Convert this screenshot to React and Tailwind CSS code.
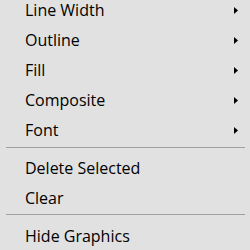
const items = [
  { label: 'Line Width', sub: true },
  { label: 'Outline', sub: true },
  { label: 'Fill', sub: true },
  { label: 'Composite', sub: true },
  { label: 'Font', sub: true },
  { sep: true, className: 'mt-[2px] mb-[5px]' },
  { label: 'Delete Selected' },
  { label: 'Clear' },
  { sep: true, className: 'mt-[1px] mb-[6px]' },
  { label: 'Hide Graphics' },
];

function Arrow() {
  return (
    <svg width="4" height="7" viewBox="0 0 4 7" className="block">
      <polygon points="0,0 4,3.5 0,7" fill="#000" />
    </svg>
  );
}

export default function App() {
  return (
    <div className="w-[250px] h-[250px] overflow-hidden bg-[#e1e1e1] text-[#000] font-['Open_Sans',sans-serif] text-[16px]">
      <div className="mt-[-5px]">
        {items.map((item, i) =>
          item.sep ? (
            <div key={i} className={`ml-[6px] mr-[5px] h-px bg-[#a0a0a0] ${item.className}`} />
          ) : (
            <div key={i} className="h-[30px] leading-[30px] pl-[25px] pr-[12px] flex items-center justify-between">
              <span>{item.label}</span>
              {item.sub && <Arrow />}
            </div>
          )
        )}
      </div>
    </div>
  );
}
